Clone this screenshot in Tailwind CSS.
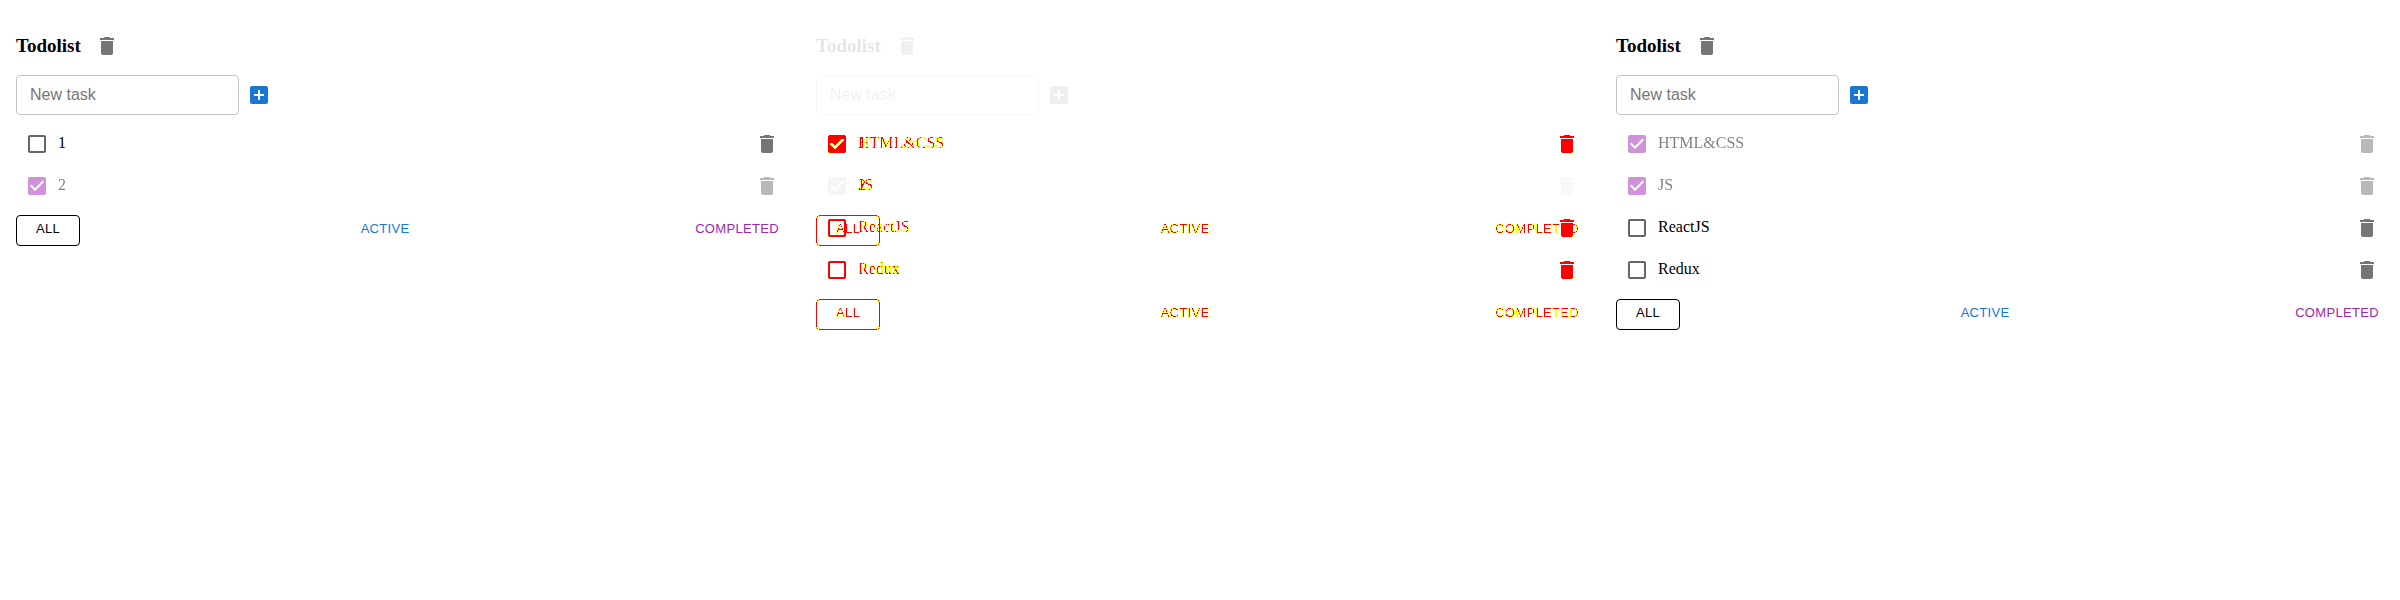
<!DOCTYPE html>
<html lang="en">
<head>
<meta charset="utf-8">
<meta name="viewport" content="width=device-width, initial-scale=1">
<title>Todolist</title>
<script src="https://cdn.jsdelivr.net/npm/@tailwindcss/browser@4"></script>
</head>
<body class="bg-white font-['Liberation_Serif',serif] text-base text-black">
<svg width="0" height="0" class="absolute" aria-hidden="true">
  <symbol id="trash" viewBox="0 0 24 24"><path d="M6 19c0 1.1.9 2 2 2h8c1.1 0 2-.9 2-2V7H6v12zM19 4h-3.500l-1-1h-5l-1 1H5v2h14V4z"/></symbol>
  <symbol id="plus" viewBox="0 0 24 24"><path d="M19 3H5c-1.110 0-2 .9-2 2v14c0 1.100.89 2 2 2h14c1.100 0 2-.9 2-2V5c0-1.100-.9-2-2-2zm-2 10h-4v4h-2v-4H7v-2h4V7h2v4h4v2z"/></symbol>
  <symbol id="off" viewBox="0 0 24 24"><path d="M19 5v14H5V5h14m0-2H5c-1.100 0-2 .9-2 2v14c0 1.100.9 2 2 2h14c1.100 0 2-.9 2-2V5c0-1.100-.9-2-2-2z"/></symbol>
  <symbol id="on" viewBox="0 0 24 24"><path d="M19 3H5c-1.110 0-2 .9-2 2v14c0 1.100.89 2 2 2h14c1.110 0 2-.9 2-2V5c0-1.100-.89-2-2-2zm-9 14l-5-5 1.410-1.410L10 14.170l7.590-7.590L19 8l-9 9z"/></symbol>
  <!-- Changed pixels: solid coverage turns red, antialiased edges turn yellow -->
  <filter id="changed" x="0" y="0" width="1" height="1" color-interpolation-filters="sRGB">
    <feColorMatrix values="0 0 0 0 1  0 0 0 1 0  0 0 0 0 0  0 0 0 1 0"/>
    <feComponentTransfer>
      <feFuncG type="discrete" tableValues="1 1 1 0"/>
      <feFuncA type="discrete" tableValues="0 1 1 1 1 1 1 1"/>
    </feComponentTransfer>
  </filter>
</svg>

<main class="grid grid-cols-3">

  <!-- Before -->
  <section class="px-4 pt-[26px]">
    <div class="flex h-10 items-center gap-[14px]">
      <h3 class="text-[19px] font-bold">Todolist</h3>
      <button aria-label="Delete list" class="text-[#757575]"><svg class="size-6 fill-current"><use href="#trash"/></svg></button>
    </div>
    <div class="mt-[9px] flex items-center gap-2">
      <input aria-label="New task" placeholder="New task" class="h-10 w-[223px] rounded border border-[#c4c4c4] px-[13px] font-['Liberation_Sans',sans-serif] placeholder:text-[#757575]">
      <button aria-label="Add task" class="text-[#1976d2]"><svg class="size-6 fill-current"><use href="#plus"/></svg></button>
    </div>
    <ul class="mt-2">
      <li class="flex h-[42px] items-center px-[9px] pr-[5px]">
        <label class="flex items-center gap-[9px]"><span class="grid text-[#666]"><input type="checkbox" class="col-start-1 row-start-1 size-6 appearance-none"><svg class="pointer-events-none col-start-1 row-start-1 size-6 fill-current"><use href="#off"/></svg></span><span class="pb-[2px]">1</span></label>
        <button aria-label="Delete 1" class="ml-auto text-[#757575]"><svg class="size-6 fill-current"><use href="#trash"/></svg></button>
      </li>
      <li class="flex h-[42px] items-center px-[9px] pr-[5px] opacity-50">
        <label class="flex items-center gap-[9px]"><span class="grid text-[#9c27b0]"><input type="checkbox" checked class="col-start-1 row-start-1 size-6 appearance-none"><svg class="pointer-events-none col-start-1 row-start-1 size-6 fill-current"><use href="#on"/></svg></span><span class="pb-[2px]">2</span></label>
        <button aria-label="Delete 2" class="ml-auto text-[#757575]"><svg class="size-6 fill-current"><use href="#trash"/></svg></button>
      </li>
    </ul>
    <div class="mt-2 flex justify-between font-['Liberation_Sans',sans-serif] text-[13px] tracking-wide">
      <button class="h-[31px] min-w-16 rounded border border-black pb-1">ALL</button>
      <button class="h-[31px] min-w-16 px-[5px] pb-1 text-[#1976d2]">ACTIVE</button>
      <button class="h-[31px] min-w-16 px-[5px] pb-1 text-[#9c27b0]">COMPLETED</button>
    </div>
  </section>

  <!-- Difference -->
  <section class="px-4 pt-[26px]">
    <div class="opacity-10 grayscale">
      <div class="flex h-10 items-center gap-[14px]">
        <h3 class="text-[19px] font-bold">Todolist</h3>
        <button aria-label="Delete list" class="text-[#757575]"><svg class="size-6 fill-current"><use href="#trash"/></svg></button>
      </div>
      <div class="mt-[9px] flex items-center gap-2">
        <input aria-label="New task" placeholder="New task" class="h-10 w-[223px] rounded border border-[#c4c4c4] px-[13px] font-['Liberation_Sans',sans-serif] placeholder:text-[#757575]">
        <button aria-label="Add task" class="text-[#1976d2]"><svg class="size-6 fill-current"><use href="#plus"/></svg></button>
      </div>
    </div>
    <div class="mt-2 grid">
      <div class="col-start-1 row-start-1 pt-[42px] opacity-10 grayscale">
        <div class="flex h-[42px] items-center px-[9px] pr-[5px] opacity-50">
          <span class="grid text-[#9c27b0]"><input type="checkbox" checked aria-label="Second task" class="col-start-1 row-start-1 size-6 appearance-none"><svg class="pointer-events-none col-start-1 row-start-1 size-6 fill-current"><use href="#on"/></svg></span>
          <button aria-label="Delete second task" class="ml-auto text-[#757575]"><svg class="size-6 fill-current"><use href="#trash"/></svg></button>
        </div>
      </div>
      <div class="col-start-1 row-start-1 grid filter-[url(#changed)]">
        <div class="col-start-1 row-start-1">
          <ul class="pl-[42px]">
            <li class="flex h-[42px] items-center pb-[2px]">1</li>
            <li class="flex h-[42px] items-center pb-[2px]">2</li>
          </ul>
          <div class="mt-2 flex justify-between font-['Liberation_Sans',sans-serif] text-[13px] tracking-wide">
            <button class="h-[31px] min-w-16 rounded border border-black pb-1">ALL</button>
            <button class="h-[31px] min-w-16 px-[5px] pb-1">ACTIVE</button>
            <button class="h-[31px] min-w-16 px-[5px] pb-1">COMPLETED</button>
          </div>
        </div>
        <div class="col-start-1 row-start-1">
          <ul>
            <li class="flex h-[42px] items-center px-[9px] pr-[5px]">
              <label class="flex items-center gap-[9px]"><span class="grid"><input type="checkbox" checked class="col-start-1 row-start-1 size-6 appearance-none"><svg class="pointer-events-none col-start-1 row-start-1 size-6 fill-current"><use href="#on"/></svg></span><span class="pb-[2px]">HTML&amp;CSS</span></label>
              <button aria-label="Delete HTML&amp;CSS" class="ml-auto"><svg class="size-6 fill-current"><use href="#trash"/></svg></button>
            </li>
            <li class="flex h-[42px] items-center pb-[2px] pl-[42px]">JS</li>
            <li class="flex h-[42px] items-center px-[9px] pr-[5px]">
              <label class="flex items-center gap-[9px]"><span class="grid"><input type="checkbox" class="col-start-1 row-start-1 size-6 appearance-none"><svg class="pointer-events-none col-start-1 row-start-1 size-6 fill-current"><use href="#off"/></svg></span><span class="pb-[2px]">ReactJS</span></label>
              <button aria-label="Delete ReactJS" class="ml-auto"><svg class="size-6 fill-current"><use href="#trash"/></svg></button>
            </li>
            <li class="flex h-[42px] items-center px-[9px] pr-[5px]">
              <label class="flex items-center gap-[9px]"><span class="grid"><input type="checkbox" class="col-start-1 row-start-1 size-6 appearance-none"><svg class="pointer-events-none col-start-1 row-start-1 size-6 fill-current"><use href="#off"/></svg></span><span class="pb-[2px]">Redux</span></label>
              <button aria-label="Delete Redux" class="ml-auto"><svg class="size-6 fill-current"><use href="#trash"/></svg></button>
            </li>
          </ul>
          <div class="mt-2 flex justify-between font-['Liberation_Sans',sans-serif] text-[13px] tracking-wide">
            <button class="h-[31px] min-w-16 rounded border border-black pb-1">ALL</button>
            <button class="h-[31px] min-w-16 px-[5px] pb-1">ACTIVE</button>
            <button class="h-[31px] min-w-16 px-[5px] pb-1">COMPLETED</button>
          </div>
        </div>
      </div>
    </div>
  </section>

  <!-- After -->
  <section class="px-4 pt-[26px]">
    <div class="flex h-10 items-center gap-[14px]">
      <h3 class="text-[19px] font-bold">Todolist</h3>
      <button aria-label="Delete list" class="text-[#757575]"><svg class="size-6 fill-current"><use href="#trash"/></svg></button>
    </div>
    <div class="mt-[9px] flex items-center gap-2">
      <input aria-label="New task" placeholder="New task" class="h-10 w-[223px] rounded border border-[#c4c4c4] px-[13px] font-['Liberation_Sans',sans-serif] placeholder:text-[#757575]">
      <button aria-label="Add task" class="text-[#1976d2]"><svg class="size-6 fill-current"><use href="#plus"/></svg></button>
    </div>
    <ul class="mt-2">
      <li class="flex h-[42px] items-center px-[9px] pr-[5px] opacity-50">
        <label class="flex items-center gap-[9px]"><span class="grid text-[#9c27b0]"><input type="checkbox" checked class="col-start-1 row-start-1 size-6 appearance-none"><svg class="pointer-events-none col-start-1 row-start-1 size-6 fill-current"><use href="#on"/></svg></span><span class="pb-[2px]">HTML&amp;CSS</span></label>
        <button aria-label="Delete HTML&amp;CSS" class="ml-auto text-[#757575]"><svg class="size-6 fill-current"><use href="#trash"/></svg></button>
      </li>
      <li class="flex h-[42px] items-center px-[9px] pr-[5px] opacity-50">
        <label class="flex items-center gap-[9px]"><span class="grid text-[#9c27b0]"><input type="checkbox" checked class="col-start-1 row-start-1 size-6 appearance-none"><svg class="pointer-events-none col-start-1 row-start-1 size-6 fill-current"><use href="#on"/></svg></span><span class="pb-[2px]">JS</span></label>
        <button aria-label="Delete JS" class="ml-auto text-[#757575]"><svg class="size-6 fill-current"><use href="#trash"/></svg></button>
      </li>
      <li class="flex h-[42px] items-center px-[9px] pr-[5px]">
        <label class="flex items-center gap-[9px]"><span class="grid text-[#666]"><input type="checkbox" class="col-start-1 row-start-1 size-6 appearance-none"><svg class="pointer-events-none col-start-1 row-start-1 size-6 fill-current"><use href="#off"/></svg></span><span class="pb-[2px]">ReactJS</span></label>
        <button aria-label="Delete ReactJS" class="ml-auto text-[#757575]"><svg class="size-6 fill-current"><use href="#trash"/></svg></button>
      </li>
      <li class="flex h-[42px] items-center px-[9px] pr-[5px]">
        <label class="flex items-center gap-[9px]"><span class="grid text-[#666]"><input type="checkbox" class="col-start-1 row-start-1 size-6 appearance-none"><svg class="pointer-events-none col-start-1 row-start-1 size-6 fill-current"><use href="#off"/></svg></span><span class="pb-[2px]">Redux</span></label>
        <button aria-label="Delete Redux" class="ml-auto text-[#757575]"><svg class="size-6 fill-current"><use href="#trash"/></svg></button>
      </li>
    </ul>
    <div class="mt-2 flex justify-between font-['Liberation_Sans',sans-serif] text-[13px] tracking-wide">
      <button class="h-[31px] min-w-16 rounded border border-black pb-1">ALL</button>
      <button class="h-[31px] min-w-16 px-[5px] pb-1 text-[#1976d2]">ACTIVE</button>
      <button class="h-[31px] min-w-16 px-[5px] pb-1 text-[#9c27b0]">COMPLETED</button>
    </div>
  </section>

</main>
</body>
</html>
